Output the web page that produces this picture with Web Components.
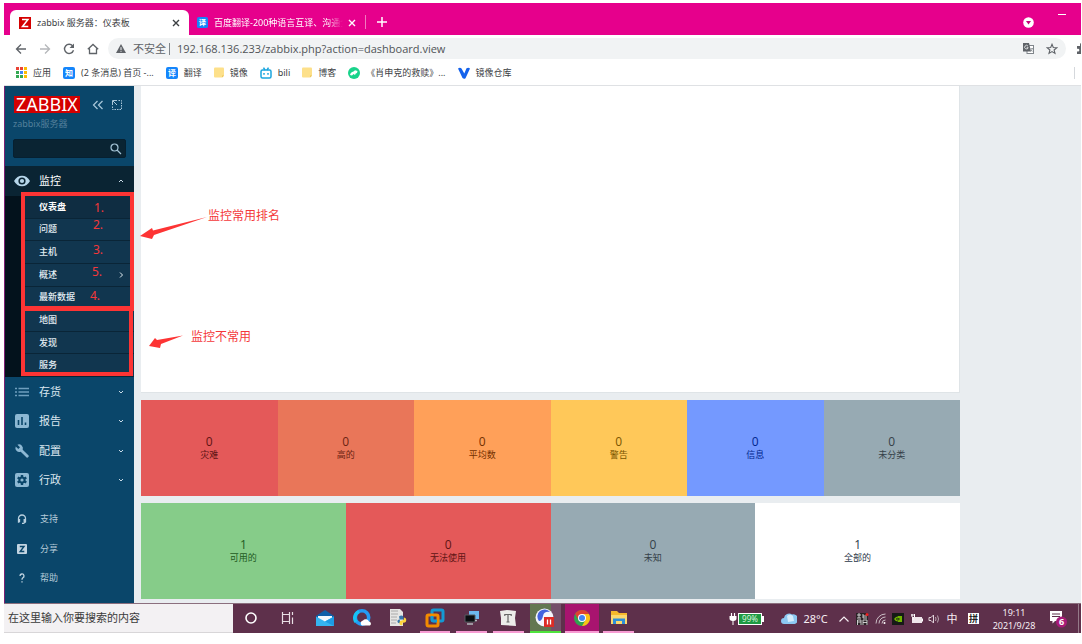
<!DOCTYPE html>
<html lang="zh-CN">
<head>
<meta charset="utf-8">
<title>zabbix 服务器：仪表板</title>
<style>
  html { height: 100%; }
  body {
    margin: 0; height: 100%; box-sizing: border-box; padding: 3px 1px 11px 4px;
    background: #fff; overflow: hidden;
    font: 9px/12px "Noto Sans", "Noto Sans CJK SC", sans-serif;
  }
</style>
</head>
<body>
<desktop-screen></desktop-screen>
<script>
const base = `
  * { box-sizing: border-box; }
  button { all: unset; box-sizing: border-box; cursor: pointer; display: flex; align-items: center; justify-content: center; }
  a { color: inherit; text-decoration: none; }
  input { border: 0; outline: 0; background: none; padding: 0; margin: 0; font: inherit; color: inherit; min-width: 0; }
  svg { display: block; flex: none; }
`;
function define(name, css, html) {
  customElements.define(name, class extends HTMLElement {
    constructor() {
      super();
      this.attachShadow({ mode: 'open' }).innerHTML =
        '<style>' + base + css + '</style>' + (typeof html === 'function' ? html(this) : html);
    }
  });
}
const badge = (ch, s = 12) => `<svg width="${s}" height="${s}" viewBox="0 0 12 12"><rect width="12" height="12" rx="2" fill="#1485fb"/><text x="6" y="9" font-size="8" font-weight="700" text-anchor="middle" fill="#fff">${ch}</text></svg>`;
const folder = `<svg width="10" height="11" viewBox="0 0 10 11"><path d="M0 1.5Q0 .5 1 .5H9q1 0 1 1V9L8 10.5H1q-1 0-1-1z" fill="#fde08a"/><path d="M10 8.500 8 10.500V8.500z" fill="#e9c45d"/></svg>`;
const stroke = (w, h, d, extra = '') => `<svg width="${w}" height="${h}" viewBox="0 0 ${w} ${h}" fill="none" stroke="currentColor" ${extra}><path d="${d}"/></svg>`;

define('tab-item', `
  :host { display: flex; align-items: center; height: 25px; padding: 0 8px; color: #fff; width: 176px; }
  :host([active]) { background: #fff; color: #3c4043; border-radius: 6px 6px 0 0; width: 179px; padding-left: 9px; }
  .title { flex: 1; min-width: 0; margin-left: 6px; overflow: hidden; white-space: nowrap; }
  :host(:not([active])) .title { mask-image: linear-gradient(to right, #000 88%, transparent); }
  button { width: 10px; height: 10px; margin-left: 4px; }
`, `<slot name="icon"></slot><span class="title"><slot></slot></span>
  <button aria-label="关闭标签页">${stroke(8, 8, 'M1 1 7 7M7 1 1 7', 'stroke-width="1.4"')}</button>`);

define('browser-tabs', `
  :host { display: flex; align-items: flex-end; height: 32px; background: #e6008c; padding-left: 6px; color: #fff; }
  .new { width: 32px; height: 14px; margin-bottom: 6px; border-left: 1px solid #f27abf; }
  .tools { margin-left: auto; display: flex; align-self: flex-start; gap: 24px; padding-right: 15px; }
  .tools button { align-self: flex-start; }
  .down { margin-top: 14px; } .min { margin-top: 8px; height: 6px; }
`, `
  <tab-item active><svg slot="icon" width="12" height="12" viewBox="0 0 12 12"><rect width="12" height="12" fill="#d40000"/><path d="M3 2.500H9L3.500 9.500H9.300" fill="none" stroke="#fff" stroke-width="1.500"/></svg>zabbix 服务器：仪表板</tab-item>
  <tab-item><span slot="icon">${badge('译', 11)}</span>百度翻译-200种语言互译、沟通全世界</tab-item>
  <button class="new" aria-label="新标签页">${stroke(10, 10, 'M5 0V10M0 5H10', 'stroke-width="1.5"')}</button>
  <div class="tools">
    <button class="down" aria-label="搜索标签页"><svg width="11" height="11" viewBox="0 0 11 11"><circle cx="5.500" cy="5.500" r="5.300" fill="#fff"/><path d="M3 4H8L5.500 7.500z" fill="#c4007a"/></svg></button>
    <button class="min" aria-label="最小化">${stroke(8, 6, 'M0 3.5H8')}</button>
  </div>`);

define('browser-toolbar', `
  :host { display: flex; align-items: center; height: 27px; background: #fff; color: #5f6368; padding-left: 5px; overflow: hidden; }
  .nav { width: 24px; height: 24px; flex: none; }
  .nav[disabled] { color: #b5b7ba; }
  .url { flex: 1; display: flex; align-items: center; height: 21px; margin: 0 10px 0 3px; border-radius: 11px; background: #f1f3f4; padding: 0 8px; font-size: 11px; line-height: 16px; }
  .url label { margin-left: 7px; white-space: nowrap; font-size: 11px; }
  .bar { width: 1px; height: 12px; background: #80868b; margin: 0 7px 0 3px; }
  .url input { flex: 1; color: #505357; font-family: "Open Sans", "Noto Sans", sans-serif; }
  .url button { margin-left: 12px; }
  .puzzle { width: 5px; overflow: hidden; justify-content: flex-start; flex: none; }
`, `
  <button class="nav" aria-label="后退">${stroke(12, 12, 'M11 6H1.500M6 1.500 1.500 6 6 10.500', 'stroke-width="1.3"')}</button>
  <button class="nav" disabled aria-label="前进">${stroke(12, 12, 'M1 6H10.500M6 1.500 10.500 6 6 10.500', 'stroke-width="1.3"')}</button>
  <button class="nav" aria-label="刷新"><svg width="12" height="12" viewBox="0 0 12 12"><path d="M9.700 3A4.600 4.600 0 1 0 10.500 7.300" fill="none" stroke="currentColor" stroke-width="1.400"/><path d="M11 .5V5H6.500z" fill="currentColor"/></svg></button>
  <button class="nav" aria-label="主页">${stroke(12, 12, 'M.8 6.300 6 1.500 11.200 6.300M2.500 5.500V10.500H9.500V5.500', 'stroke-width="1.3"')}</button>
  <div class="url">
    <svg width="10" height="9" viewBox="0 0 10 9"><path d="M5 0 10 9H0z" fill="#5f6368"/><path d="M5 3.200V6M5 6.800V7.800" stroke="#f1f3f4" stroke-width="1"/></svg>
    <label for="u">不安全</label><span class="bar"></span>
    <input id="u" value="192.168.136.233/zabbix.php?action=dashboard.view">
    <button aria-label="翻译此页"><svg width="11" height="11" viewBox="0 0 11 11"><rect x="4" y="2.500" width="6.500" height="8" fill="#fff" stroke="#80868b"/><path d="M0 0H6L8 8.500H0z" fill="#5f6368"/><path d="M5 3.200A1.800 1.800 0 1 0 5.200 4.700H3.700" fill="none" stroke="#f1f3f4" stroke-width=".8"/><path d="M7.500 5.500H10M9.500 5.500 8 8.500M8 6.500 9.500 8.500" stroke="#80868b" stroke-width=".7"/></svg></button>
    <button aria-label="收藏">${stroke(12, 12, 'M6 1.300 7.300 4.500 10.800 4.800 8.100 7 9 10.400 6 8.600 3 10.400 3.900 7 1.200 4.800 4.700 4.500z', 'stroke-width="1.1"')}</button>
  </div>
  <button class="puzzle" aria-label="扩展程序"><svg width="12" height="12" viewBox="0 0 12 12"><path d="M1 3H4V1.500a1.500 1.500 0 0 1 3 0V3H10V11H1V8.500H2a1.300 1.300 0 0 0 0-2.700H1z" fill="#5f6368"/></svg></button>`);

define('bookmark-link', `
  :host { display: block; }
  a { display: flex; align-items: center; gap: 6px; white-space: nowrap; }
`, `<a href="#"><slot name="icon"></slot><span><slot></slot></span></a>`);

const apps = `<svg slot="icon" width="11" height="11" viewBox="0 0 11 11">${['#ea4335','#ea4335','#fbbc04','#34a853','#4285f4','#fbbc04','#34a853','#34a853','#fbbc04'].map((c, i) => `<rect x="${i % 3 * 4}" y="${(i / 3 | 0) * 4}" width="3" height="3" fill="${c}"/>`).join('')}</svg>`;
define('bookmark-bar', `
  :host { display: flex; align-items: center; height: 24px; padding: 0 6px 2px 12px; gap: 12px; background: #fff; color: #3c4043; border-bottom: 1px solid #dfe1e4; }
  i { margin-left: auto; width: 1px; height: 12px; background: #d5d8dc; }
`, `
  <bookmark-link>${apps}应用</bookmark-link>
  <bookmark-link><span slot="icon">${badge('知')}</span>(2 条消息) 首页 -...</bookmark-link>
  <bookmark-link><span slot="icon">${badge('译')}</span>翻译</bookmark-link>
  <bookmark-link><span slot="icon">${folder}</span>镜像</bookmark-link>
  <bookmark-link><svg slot="icon" width="12" height="12" viewBox="0 0 12 12" fill="none" stroke="#1ba5de" stroke-width="1.500"><rect x="1" y="3" width="10" height="8" rx="1.500"/><path d="M3.500 .7 5 3M8.500 .7 7 3M4 6V7.800M8 6V7.800"/></svg>bili</bookmark-link>
  <bookmark-link><span slot="icon">${folder}</span>博客</bookmark-link>
  <bookmark-link><svg slot="icon" width="12" height="12" viewBox="0 0 12 12"><circle cx="6" cy="6" r="6" fill="#19d38b"/><path d="M2 8Q2.500 5 5.500 4.500L7 3.300 9.500 4 9 6Q7.500 6 7 8L5.500 7 4 8.500z" fill="#fff"/></svg>《肖申克的救赎》...</bookmark-link>
  <bookmark-link><svg slot="icon" width="12" height="12" viewBox="0 0 12 12"><path d="M0 1.500Q2 0 3.500 1.500L6.300 6.500 8.500 1.200Q10.500 0 12 1.500L7.500 11.300Q6 12.500 4.500 11z" fill="#1462ec"/></svg>镜像仓库</bookmark-link>
  <i></i>`);

const icons = {
  eye: `<svg width="16" height="16" viewBox="0 0 16 16"><path d="M0 8Q3 2.700 8 2.700T16 8Q13 13.300 8 13.300T0 8z" fill="#b6d6ea"/><circle cx="8" cy="8" r="3.600" fill="#0a2433"/><circle cx="8" cy="8" r="2.100" fill="#b6d6ea"/></svg>`,
  list: `<svg width="16" height="16" viewBox="0 0 16 16" stroke="#6f9fbe" stroke-width="1.300"><path d="M1 4.500H3M4.500 4.500H15M1 8H3M4.500 8H15M1 11.500H3M4.500 11.500H15"/></svg>`,
  chart: `<svg width="16" height="16" viewBox="0 0 16 16"><rect x="1" y="1" width="14" height="14" rx="2" fill="#8db8d3"/><path d="M4.500 7V12M8 4V12M11.500 9.500V12" stroke="#0a466a" stroke-width="1.600"/></svg>`,
  wrench: `<svg width="16" height="16" viewBox="0 0 16 16"><path d="M14.600 12.600 8.700 6.700A4 4 0 0 0 3.400 1.700L6 4.300 4.300 6 1.700 3.400A4 4 0 0 0 6.700 8.700L12.600 14.600Q13.200 15 13.700 14.600L14.600 13.700Q15 13.200 14.600 12.600z" fill="#8db8d3"/></svg>`,
  gear: `<svg width="16" height="16" viewBox="0 0 16 16"><rect x="1" y="1" width="14" height="14" rx="2" fill="#8db8d3"/><circle cx="8" cy="8" r="3.600" fill="#0a466a"/><path d="M8 3V13M3.700 5.500 12.300 10.500M12.300 5.500 3.700 10.500" stroke="#0a466a" stroke-width="2.400"/><circle cx="8" cy="8" r="1.600" fill="#8db8d3"/></svg>`,
  support: `<svg width="10" height="10" viewBox="0 0 10 10" fill="none" stroke="#b9d0df" stroke-width="1.300"><path d="M2.500 8H1.500V4.500A3.500 3.500 0 0 1 8.500 4.500V8L6.500 9.400H5M7.200 5V8M2.500 5V8"/></svg>`,
  share: `<svg width="10" height="10" viewBox="0 0 10 10"><rect width="10" height="10" rx="1" fill="#c3d5e2"/><path d="M2.800 2.500H7L3.200 7.500H7.300" fill="none" stroke="#0a466a" stroke-width="1.400"/></svg>`,
  help: `<svg width="10" height="10" viewBox="0 0 10 10" fill="none" stroke="#c3d5e2" stroke-width="1.300"><path d="M3 3A2 2 0 1 1 5.800 4.800Q5 5.200 5 6.700M5 8.200V9.600"/></svg>`,
  user: `<svg width="10" height="10" viewBox="0 0 10 10"><circle cx="5" cy="2.500" r="2.200" fill="#c3d5e2"/><path d="M1 10Q1 5.500 5 5.500T9 10z" fill="#c3d5e2"/></svg>`
};
const down = stroke(6, 6, 'M1 2 3 4 5 2'), up = stroke(6, 6, 'M1 4 3 2 5 4'), right = stroke(6, 6, 'M2 .5 4.500 3 2 5.500');

define('nav-item', `
  :host { display: block; }
  a { display: flex; align-items: center; height: 100%; color: #c9dbe7; padding: 0 10px 0 9px; }
  .icon { width: 16px; display: flex; justify-content: center; margin-right: 9px; }
  .label { flex: 1; font-size: 11px; color: #dbe7ef; }
  :host([small]) .label { font-size: 9px; color: #b6cbd9; margin-left: 1px; }
  :host([open]) { background: #0a2433; }
  :host([open]) .label { color: #fff; }
`, el => `<a href="#"><span class="icon">${icons[el.getAttribute('icon')]}</span><span class="label"><slot></slot></span>${el.hasAttribute('small') ? '' : el.hasAttribute('open') ? up : down}</a>`);

define('sub-item', `
  :host { display: block; background: #11364f; border-bottom: 1px solid #0a2537; }
  :host([selected]) { background: #0f2d42; }
  a { display: flex; align-items: center; justify-content: space-between; height: 100%; color: #e3edf3; padding: 0 10px 0 18px; font-weight: 500; }
  :host([selected]) a { font-weight: 700; color: #fff; }
`, el => `<a href="#"><slot></slot>${el.hasAttribute('more') ? right : ''}</a>`);

define('side-nav', `
  :host { display: flex; flex-direction: column; width: 130px; flex: none; overflow: hidden; background: #0a466a; border-left: 1px solid #7b1f74; }
  .head { display: flex; align-items: center; flex: none; padding: 10px 12px 0 9px; color: #a9c7da; }
  .logo { background: #d40000; color: #fff; font: 18px/17px "Noto Sans", sans-serif; width: 68px; height: 17px; text-align: center; margin-right: 12px; }
  .compact { margin-left: 8px; }
  .server { padding: 5px 0 0 8px; color: #54809b; height: 26px; flex: none; white-space: nowrap; }
  .search { display: flex; align-items: center; height: 19px; flex: none; margin: 0 8px; padding: 0 3px 0 6px; background: #0a2433; border: 1px solid #062031; border-radius: 2px; color: #a3c3d6; }
  .search input { flex: 1; }
  nav { display: grid; grid-auto-rows: 1fr; flex: none; }
  .top { height: 30px; margin-top: 8px; }
  .sub { height: 181px; padding-left: 16px; background: #03121c; }
  .main { height: 118px; }
  .foot { height: 119px; margin-top: 9px; }
`, `
  <div class="head"><span class="logo">ZABBIX</span>
    <button aria-label="收起侧栏">${stroke(12, 10, 'M5.500 1 1.500 5 5.500 9M10.500 1 6.500 5 10.500 9', 'stroke-width="1.2"')}</button>
    <button class="compact" aria-label="隐藏侧栏"><svg width="10" height="10" viewBox="0 0 10 10" fill="none" stroke="currentColor"><path d="M.5 5V.5H5M1 1 5 5"/><path d="M6.500 .5H9.500V9.500H.5V6.500" stroke-dasharray="1.500 1"/></svg></button></div>
  <div class="server">zabbix服务器</div>
  <div class="search"><input aria-label="搜索"><button aria-label="搜索">${stroke(12, 12, 'M8 4.500A3.500 3.500 0 1 1 1 4.500 3.500 3.500 0 0 1 8 4.500M7 7 11 11', 'stroke-width="1.2"')}</button></div>
  <nav class="top"><nav-item icon="eye" open>监控</nav-item></nav>
  <nav class="sub">
    <sub-item selected>仪表盘</sub-item><sub-item>问题</sub-item><sub-item>主机</sub-item><sub-item more>概述</sub-item>
    <sub-item>最新数据</sub-item><sub-item>地图</sub-item><sub-item>发现</sub-item><sub-item>服务</sub-item>
  </nav>
  <nav class="main"><nav-item icon="list">存货</nav-item><nav-item icon="chart">报告</nav-item><nav-item icon="wrench">配置</nav-item><nav-item icon="gear">行政</nav-item></nav>
  <nav class="foot"><nav-item small icon="support">支持</nav-item><nav-item small icon="share">分享</nav-item><nav-item small icon="help">帮助</nav-item><nav-item small icon="user"></nav-item></nav>`);

define('stat-tile', `
  :host { display: flex; flex-direction: column; align-items: center; justify-content: center; flex: 1; background: var(--bg); color: var(--fg); }
  b { font: 12px/14px "Open Sans", "Noto Sans", sans-serif; }
`, el => `<b>${el.getAttribute('count')}</b><span><slot></slot></span>`);

define('dash-board', `
  :host { display: flex; flex-direction: column; flex: 1; gap: 7px; padding: 0 121px 4px 7px; background: #e9edf0; }
  .blank { flex: 1; background: #fff; border: solid #dfe4e7; border-width: 0 1px 1px 0; }
  .row { display: flex; height: 96px; background: #fff; }
`, `
  <section class="blank"></section>
  <section class="row">
    <stat-tile count="0" style="--bg:#e45959;--fg:#5f1414">灾难</stat-tile>
    <stat-tile count="0" style="--bg:#e97659;--fg:#6b2413">高的</stat-tile>
    <stat-tile count="0" style="--bg:#ffa059;--fg:#733100">平均数</stat-tile>
    <stat-tile count="0" style="--bg:#ffc859;--fg:#7a5500">警告</stat-tile>
    <stat-tile count="0" style="--bg:#7499ff;--fg:#00268e">信息</stat-tile>
    <stat-tile count="0" style="--bg:#97aab3;--fg:#354148">未分类</stat-tile>
  </section>
  <section class="row">
    <stat-tile count="1" style="--bg:#86cc89;--fg:#1f5a22">可用的</stat-tile>
    <stat-tile count="0" style="--bg:#e45959;--fg:#5f1414">无法使用</stat-tile>
    <stat-tile count="0" style="--bg:#97aab3;--fg:#354148">未知</stat-tile>
    <stat-tile count="1" style="--bg:#fff;--fg:#2b3848">全部的</stat-tile>
  </section>`);

/* Hand-drawn marks laid over the page: frames, arrows and notes. */
define('markup-layer', `
  :host { position: absolute; inset: 0; pointer-events: none; color: #f4383a; font-size: 12px; line-height: 16px; }
  svg { position: absolute; left: 0; top: 0; }
  span { position: absolute; left: var(--x); top: var(--y); white-space: nowrap; }
`, `
  <svg width="290" height="300" viewBox="0 0 290 300">
    <g fill="none" stroke="#fd3434" stroke-width="4"><rect x="19" y="108" width="109" height="115"/><rect x="19" y="222" width="108" height="66"/></g>
    <path d="M136 150 148 142 149 144.500 203 131 150 149 148 153z" fill="#fd3434"/>
    <path d="M145 260 151 252 153 254 179 249.500 157 258 156 262z" fill="#fd3434"/>
  </svg>
  <span style="--x:204px;--y:122px">监控常用排名</span>
  <span style="--x:187px;--y:243px">监控不常用</span>
  <span style="--x:90px;--y:114px">1.</span>
  <span style="--x:89px;--y:131px">2.</span>
  <span style="--x:89px;--y:156px">3.</span>
  <span style="--x:88px;--y:178px">5.</span>
  <span style="--x:86px;--y:202px">4.</span>`);

const S = (b, w = 20, h = 20) => `<svg width="${w}" height="${h}" viewBox="0 0 ${w} ${h}">${b}</svg>`;
const dock = [
  ['Cortana', '', S('<circle cx="10" cy="10" r="5" fill="none" stroke="#fff" stroke-width="1.600"/>')],
  ['任务视图', '', S('<path d="M4.500 4V6.500H11.500V4M4.500 16V13.500H11.500V16M4.500 6.500V13.500M11.500 6.500V13.500M14.500 4V7M14.500 9.500V16" fill="none" stroke="#e9dfe5" stroke-width="1.200"/>')],
  ['邮件', '', S('<path d="M1 8 10 2 19 8V18H1z" fill="#0e5fa8"/><path d="M3 8H17V14H3z" fill="#f2f8fc"/><path d="M1 8.500 10 13.500 19 8.500V18H1z" fill="#35b5f1"/><path d="M10 13.500 19 8.500V18z" fill="#1d9be4"/>')],
  ['浏览器', '', S('<circle cx="10" cy="9.500" r="6.700" fill="none" stroke="#239bf5" stroke-width="3.600"/><path d="M4 14A7 7 0 0 1 7 3.500" stroke="#16c3f5" stroke-width="3.400" fill="none"/><path d="M10 17.500a2.700 2.700 0 0 1 1-5 3.500 3.500 0 0 1 6 1 2.200 2.200 0 0 1 1 4z" fill="#fff"/>')],
  ['Python', '', S('<path d="M2 1H12L15 4V18H2z" fill="#e5e5e3"/><path d="M3 3H10M3 6H10M3 9H9M3 12H9M3 15H8" stroke="#aaa"/><path d="M11 8.500Q14 6.500 15.500 9V11.500H11.500Q9 11.500 9.500 14Q10 15.500 12 15V13Z" fill="#3776ab"/><path d="M16 9.500Q19 10 18 13.500Q17.500 15 14.500 14.500V17Q11.500 18 11.500 15.500V14Q11.500 12.500 14 12.500 16 12.500 16 9.500z" fill="#ffd43b"/>')],
  ['VMware', 'run', S('<rect x="7" y="2" width="11" height="11" rx="1.500" fill="none" stroke="#1499d4" stroke-width="3"/><rect x="2" y="7" width="11" height="11" rx="1.500" fill="none" stroke="#f38b00" stroke-width="3"/><path d="M7 8V11.500Q7 13 8.500 13H12" fill="none" stroke="#1499d4" stroke-width="2.500"/>')],
  ['远程终端', 'run', S('<path d="M7 3H17V11H7z" fill="#6db7ee"/><path d="M3 7H13V14H3z" fill="#0b0d10" stroke="#565a60"/><path d="M5 16H11M13 12.500H15" stroke="#b4b8bd" stroke-width="1.500"/>')],
  ['Typora', 'run', S('<path d="M2 3 9 2 18 3 17 10 18 18 3 17 3 10z" fill="#ececea"/><path d="M6.500 6.500H13.500M10 6.500V14M8.500 14H11.500M6.800 6V8M13.200 6V8" stroke="#666" stroke-width="1.200" fill="none"/>')],
  ['录屏', 'rec', S('<circle cx="9.500" cy="9.500" r="9" fill="#f4f6fc"/><path d="M4 13A7 7 0 0 1 15 4Q9 3 8 8T4 13z" fill="#4464df"/><path d="M10 9H14Q11 12 14 15 9 14 10 9z" fill="#6d83ea"/><path d="M9 9H19V19H9z" fill="#dc2d26"/><path d="M12.500 11.500V16.500M15.500 11.500V16.500" stroke="#fff" stroke-width="1.300"/>')],
  ['Chrome', 'run active', S('<circle cx="10" cy="10" r="8" fill="#31a350"/><path d="M3.070 6A8 8 0 0 1 16.930 6H10L6.500 12z" fill="#df4032"/><path d="M16.930 6A8 8 0 0 1 10 18L13.500 12 10 6z" fill="#fbc116"/><circle cx="10" cy="10" r="4" fill="#fff"/><circle cx="10" cy="10" r="3" fill="#4285f4"/>')],
  ['文件资源管理器', 'run', S('<path d="M2 3H8L10 5H18V16H2z" fill="#f6b92c"/><path d="M2 7H18V16H2z" fill="#fbd86e"/><path d="M4 16V10.500H16V16H13V13H7V16z" fill="#2e8fd8"/>')]
];
define('task-bar', `
  :host { display: flex; height: 30px; flex: none; background: #5e304b; color: #f6eef3; border-top: 1px solid #8b6f7e; }
  .find { width: 229px; background: #f3f1f3; color: #3a3a3a; padding: 0 4px; font-size: 11px; border-bottom: 1px solid #d8d6d8; flex: none; }
  .find::placeholder { color: #3a3a3a; opacity: 1; }
  .dock { display: grid; grid-template-columns: repeat(11, 1fr); width: 404px; flex: none; }
  .dock button { margin: 0 3px; border-bottom: 2px solid transparent; }
  .dock .run { border-bottom-color: #f79bd3; }
  .dock .active { background: #a8146f; margin: 0 1px; }
  .dock .rec { border-bottom-color: #4ee43c; background: linear-gradient(90deg, #637751 67%, #75506a 67%); }
  .tray { margin-left: auto; display: flex; align-items: center; }
  .tray button { height: 29px; width: 18px; flex: none; }
  .tray .power { width: 38px; }
  .tray .weather { width: 57px; margin: 0 2px 0 10px; gap: 6px; font-size: 11px; white-space: nowrap; }
  .tray .ime { font-size: 11px; }
  .tray .pin { margin-left: 3px; }
  .tray .clock { width: 52px; margin: 0 7px 0 6px; flex-direction: column; line-height: 13px; }
  .tray .note { width: 22px; margin-right: 9px; }
  .tray i { width: 1px; height: 29px; background: #957a89; margin-right: 2px; }
`, `
  <input class="find" aria-label="搜索" placeholder="在这里输入你要搜索的内容">
  <div class="dock">${dock.map(([n, c, s]) => `<button class="${c}" aria-label="${n}">${s}</button>`).join('')}</div>
  <div class="tray">
    <button class="power">${S('<path d="M2.500 1V4M5.500 1V4" stroke="#fff" stroke-width="1.200"/><path d="M.5 4H7.500V6.500Q7.500 8.500 4.500 9V13H3.500V9Q.5 8.500 .5 6.500z" fill="#fff"/><rect x="9.500" y="1.500" width="23" height="11" fill="#1f9a43" stroke="#fff"/><rect x="33" y="4" width="2" height="6" fill="#fff"/><text x="21" y="10" font-size="8" text-anchor="middle" fill="#d9f3df">99%</text>', 36, 14)}</button>
    <button class="weather">${S('<path d="M3 12A3 3 0 0 1 3 6 5 5 0 0 1 11 2.500 4.500 4.500 0 0 1 13.500 12z" fill="#8cc8f2"/><path d="M6 4A4 4 0 0 1 12 4L13 9 7 10z" fill="#d4ecfc"/>', 16, 13)}<span>28°C</span></button>
    <button aria-label="显示隐藏的图标">${stroke(10, 10, 'M.5 7.500 5 3 9.500 7.500', 'stroke-width="1.2"')}</button>
    <button aria-label="输入法设置">${S('<rect width="12" height="12" fill="#2a2226"/><path d="M1 2H5M3 0V5M1 5H5M1.500 7H5V12M1.500 7V12M1.500 9H5M7 1V5H11M7 3H11M7 7H11V12M7 7V12M7 9.500H11" stroke="#ddd" fill="none" stroke-width=".9"/><circle cx="11" cy="1.500" r="1.500" fill="#e22"/>', 13, 12)}</button>
    <button aria-label="网络">${S('<g fill="none" stroke="#cbbdc5"><path d="M1 10.500A9.500 9.500 0 0 1 10.500 1M4 10.500A6.500 6.500 0 0 1 10.500 4M7 10.500A3.500 3.500 0 0 1 10.500 7"/></g><circle cx="9.500" cy="10" r="1" fill="#fff"/>', 11, 12)}</button>
    <button aria-label="NVIDIA">${S('<rect width="12" height="12" fill="#161a16"/><path d="M2 6Q4 3 6 3.500V3H10V9H6V8.500Q3.500 8.500 2 6z" fill="#72b500"/><path d="M4 6Q5.500 4.500 7.500 6 6 8 4.500 6.500" fill="none" stroke="#161a16" stroke-width=".8"/>', 12, 12)}</button>
    <button aria-label="电池">${S('<path d="M2 4H12V10H2z" fill="#efe6eb"/><path d="M12.500 5.500V8.500M1 2H5M2 1V4M4.500 1V4M3 4V7" stroke="#fff"/>', 13, 12)}</button>
    <button aria-label="音量">${S('<path d="M1 4.500H3L5.500 2V10L3 7.500H1z" fill="none" stroke="#e0d3da"/><path d="M7.500 4Q8.500 6 7.500 8M9.500 2.500Q11.500 6 9.500 9.500" fill="none" stroke="#b9a7b1"/>', 12, 12)}</button>
    <button class="ime">中</button>
    <button class="pin" aria-label="拼音">${S('<rect width="11" height="11" fill="#fff"/><text x="5.500" y="9" font-size="9" font-weight="700" text-anchor="middle" fill="#222">拼</text>', 11, 11)}</button>
    <button class="clock"><span>19:11</span><span>2021/9/28</span></button>
    <button class="note" aria-label="通知">${S('<path d="M1 1H13V11H6L3.500 13.500V11H1z" fill="#fff"/><path d="M3 4H11M3 6.500H11" stroke="#5e304b"/><circle cx="12.500" cy="12" r="5.500" fill="#a81a78"/><text x="12.500" y="15" font-size="9" font-weight="700" text-anchor="middle" fill="#fff">6</text>', 18, 18)}</button>
    <i></i>
  </div>`);

define('desktop-screen', `
  :host { display: flex; flex-direction: column; height: 100%; overflow: hidden; }
  main { flex: 1; min-height: 0; display: flex; position: relative; }
`, `<browser-tabs></browser-tabs><browser-toolbar></browser-toolbar><bookmark-bar></bookmark-bar>
  <main><side-nav></side-nav><dash-board></dash-board><markup-layer></markup-layer></main>
  <task-bar></task-bar>`);
</script>
</body>
</html>
